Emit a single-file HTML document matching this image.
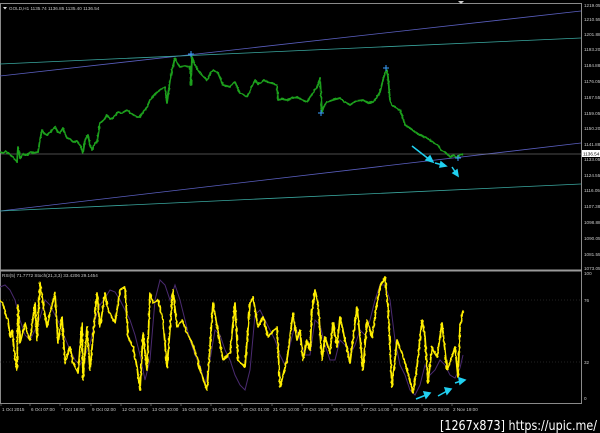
<!DOCTYPE html>
<html><head><meta charset="utf-8"><style>
html,body{margin:0;padding:0;background:#000;width:600px;height:433px;overflow:hidden}
svg{display:block}
text{font-family:"Liberation Sans",sans-serif;font-size:4.6px;fill:#c8c8c8}
.wm{font-family:"DejaVu Sans","Liberation Sans",sans-serif;font-size:13px;fill:#fff}
</style></head><body>
<svg width="600" height="433" viewBox="0 0 600 433" xmlns="http://www.w3.org/2000/svg">
<defs>
<filter id="jit" x="-5%" y="-20%" width="110%" height="140%">
<feTurbulence type="fractalNoise" baseFrequency="0.35" numOctaves="1" seed="3"/>
<feDisplacementMap in="SourceGraphic" scale="2" xChannelSelector="R" yChannelSelector="G"/>
</filter>
<filter id="jit2" x="-5%" y="-20%" width="110%" height="140%">
<feTurbulence type="fractalNoise" baseFrequency="0.3" numOctaves="1" seed="7"/>
<feDisplacementMap in="SourceGraphic" scale="2.5" xChannelSelector="R" yChannelSelector="G"/>
</filter>
</defs>
<rect width="600" height="433" fill="#000"/>
<rect x="0.5" y="3.5" width="581" height="400" fill="none" stroke="#8a8a8a" stroke-width="1"/>
<line x1="0" y1="270.5" x2="582" y2="270.5" stroke="#9a9a9a" stroke-width="2"/>
<polygon points="458,1 464,1 461,4" fill="#ccc"/>
<polygon points="3,7 7,7 5,9.5" fill="#ddd"/>
<text x="9" y="10">GOLD,H1  1135.74 1136.85 1135.40 1136.54</text>
<text x="2" y="277">RSI(5) 71.7772  Stoch(21,3,3) 33.4206 29.1454</text>
<line x1="0" y1="76" x2="581" y2="11" stroke="#5a5fc0" stroke-width="0.8"/>
<line x1="0" y1="64" x2="581" y2="38" stroke="#3aa8a0" stroke-width="0.8"/>
<line x1="0" y1="211" x2="581" y2="143" stroke="#5a5fc0" stroke-width="0.8"/>
<line x1="0" y1="211" x2="581" y2="184" stroke="#3aa8a0" stroke-width="0.8"/>
<line x1="0" y1="154" x2="581" y2="154" stroke="#9a9a9a" stroke-width="0.6"/>
<g filter="url(#jit)">
<polyline fill="none" stroke="#1fa01f" stroke-width="1.8" stroke-linejoin="round" points="0,152 3,153 6,151 10,155 13,157 15,160 17,162 18,147 20,158 23,154 27,155 30,152 33,153 38,152 40,140 42,130 45,134 47,135 51,131 55,127 58,132 60,133 63,128 65,134 67,138 70,139 73,142 77,141 80,145 83,153 85,140 88,135 90,145 92,150 95,143 97,142 100,123 104,120 107,115 110,119 113,118 116,114 118,112 122,113 127,110 132,114 137,117 140,117 143,112 147,107 150,100 155,94 160,90 165,87 167,103 170,80 172,70 175,58 178,64 180,67 185,66 190,67 191,85 192,57 195,65 198,70 200,73 204,77 207,80 210,74 213,70 216,72 218,73 221,80 223,85 227,86 230,87 233,83 235,82 238,89 240,93 244,95 247,97 251,88 255,80 258,84 260,83 264,80 267,82 272,83 277,85 278,100 282,99 287,100 292,98 297,97 302,100 307,102 312,94 317,87 320,78 322,112 324,106 327,102 333,100 340,98 345,102 350,105 356,101 363,100 368,103 373,102 377,97 380,92 383,80 385,73 387,70 388,77 390,100 392,105 396,108 400,110 403,118 405,125 410,128 415,132 420,135 425,137 430,140 434,143 438,145 441,150 445,152 448,155 451,157 454,155 457,158 460,155 463,154"/>
</g>
<g stroke="#3aa0ff" stroke-width="1">
<path d="M191,51v6M188,54h6"/><path d="M321,110v6M318,113h6"/><path d="M386,65v6M383,68h6"/><path d="M458,155v6M455,158h6"/>
</g>
<g stroke="#20d0f0" stroke-width="1.5" fill="#20d0f0">
<line x1="412" y1="146" x2="430" y2="160"/><polygon points="433,162 426,160 430,156"/>
<line x1="435" y1="163" x2="443" y2="165"/><polygon points="446,166 440,167 441,162"/>
<line x1="452" y1="167" x2="456" y2="173"/><polygon points="458,176 453,173 457,170"/>
</g>
<g>
<text x="584" y="7">1219.05</text><text x="584" y="21">1210.55</text><text x="584" y="36">1201.88</text><text x="584" y="51">1193.20</text><text x="584" y="67">1184.88</text><text x="584" y="83">1176.05</text><text x="584" y="99">1167.55</text><text x="584" y="115">1159.05</text><text x="584" y="130">1150.20</text><text x="584" y="146">1141.88</text><text x="584" y="161">1133.05</text><text x="584" y="177">1124.55</text><text x="584" y="192">1116.05</text><text x="584" y="208">1107.38</text><text x="584" y="224">1098.88</text><text x="584" y="240">1090.05</text><text x="584" y="256">1081.55</text><text x="584" y="270">1073.05</text>
</g>
<rect x="582" y="150" width="18" height="7" fill="#fff"/>
<text x="583" y="155.5" style="fill:#000">1136.54</text>
<line x1="0" y1="300" x2="581" y2="300" stroke="#444" stroke-width="0.5" stroke-dasharray="1,2"/>
<line x1="0" y1="362" x2="581" y2="362" stroke="#444" stroke-width="0.5" stroke-dasharray="1,2"/>
<text x="584" y="275">100</text><text x="584" y="302">76</text><text x="584" y="364">32</text><text x="584" y="400">0</text>
<polyline fill="none" stroke="#4a2a70" stroke-width="1" points="0,287 5,285 10,290 15,300 20,320 25,335 30,340 35,330 40,318 45,300 50,305 55,315 60,325 65,338 70,350 75,360 80,365 85,355 90,345 95,320 100,305 105,298 110,290 115,292 120,300 125,310 130,320 135,335 140,355 145,380 150,360 155,300 160,280 165,285 170,300 175,285 180,300 185,320 190,340 195,355 200,365 205,385 210,360 215,330 220,335 225,350 230,360 235,375 240,385 245,390 250,370 255,315 260,310 265,320 270,330 275,340 280,355 285,365 290,345 295,325 300,340 305,355 310,355 315,320 320,325 325,345 330,360 335,360 340,340 345,345 350,355 355,345 360,330 365,335 370,320 375,300 380,285 385,285 390,300 395,340 400,365 405,375 410,390 415,395 420,385 425,365 430,375 435,370 440,360 445,365 450,375 455,378 460,368 463,355"/>
<g filter="url(#jit2)">
<polyline fill="none" stroke="#ffee00" stroke-width="1.8" stroke-linejoin="round" points="0,300 3,303 5,313 8,320 10,337 12,330 15,358 17,370 18,305 20,343 25,323 28,335 30,340 35,303 37,340 40,283 43,303 47,327 50,313 55,293 58,343 62,317 65,363 70,347 73,363 78,373 82,323 83,380 87,327 90,370 97,293 100,327 105,293 108,310 115,323 120,290 125,287 128,337 133,347 137,367 140,390 143,333 147,370 150,293 153,303 158,300 163,320 167,367 173,290 177,327 182,320 187,333 192,343 197,357 200,370 207,390 213,303 220,343 223,360 230,353 235,303 238,360 245,367 250,303 253,297 258,327 263,317 268,337 277,327 280,387 287,360 293,313 297,340 300,330 303,360 307,340 310,350 312,310 315,290 318,303 322,360 325,337 330,353 333,323 337,347 340,317 345,340 350,363 357,307 360,337 363,370 367,320 372,337 377,303 380,287 385,277 388,307 392,387 397,340 402,353 407,370 413,393 417,367 422,320 425,337 428,383 432,347 437,357 442,323 447,370 452,357 455,347 458,377 460,327 463,310"/>
</g>
<g stroke="#20d0f0" stroke-width="1.5" fill="#20d0f0">
<line x1="416" y1="399" x2="426" y2="395"/><polygon points="430,393 424,392 426,398"/>
<line x1="438" y1="396" x2="447" y2="391"/><polygon points="451,389 445,388 447,394"/>
<line x1="455" y1="383" x2="461" y2="381"/><polygon points="465,380 459,378 460,384"/>
</g>
<g stroke="#8a8a8a" stroke-width="0.6">
<path d="M1,403v3M30,403v3M60,403v3M91,403v3M121,403v3M151,403v3M181,403v3M211,403v3M242,403v3M272,403v3M302,403v3M332,403v3M362,403v3M392,403v3M422,403v3M452,403v3"/>
</g>
<g style="font-size:4.2px">
<text x="2" y="411">1 Oct 2015</text><text x="31" y="411">6 Oct 07:00</text><text x="61" y="411">7 Oct 16:00</text><text x="92" y="411">9 Oct 02:00</text><text x="122" y="411">12 Oct 11:00</text><text x="152" y="411">13 Oct 20:00</text><text x="182" y="411">15 Oct 06:00</text><text x="212" y="411">16 Oct 15:00</text><text x="243" y="411">20 Oct 01:00</text><text x="273" y="411">21 Oct 10:00</text><text x="303" y="411">22 Oct 19:00</text><text x="333" y="411">26 Oct 05:00</text><text x="363" y="411">27 Oct 14:00</text><text x="393" y="411">29 Oct 00:00</text><text x="423" y="411">30 Oct 09:00</text><text x="453" y="411">2 Nov 19:00</text>
</g>
<text class="wm" x="440" y="430" textLength="157" lengthAdjust="spacingAndGlyphs">[1267x873] https://upic.me/</text>
</svg>
</body></html>
